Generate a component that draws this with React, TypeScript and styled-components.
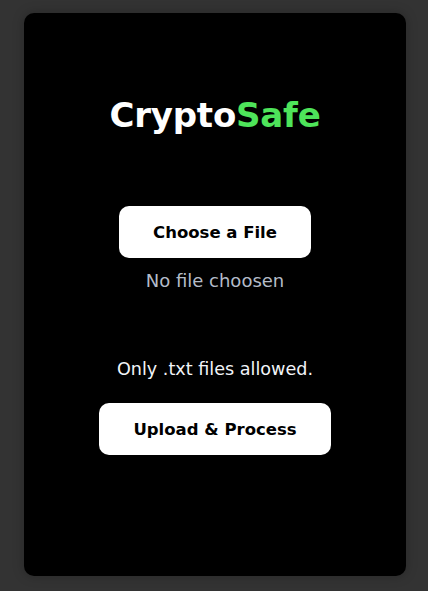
import React from "react";
import styled, { createGlobalStyle } from "styled-components";

const Global = createGlobalStyle`
  html, body { margin: 0; padding: 0; background: #333333; }
  body { font-family: "DejaVu Sans", "Noto Sans", sans-serif; }
`;

const Page = styled.div`
  width: 428px;
  height: 591px;
  box-sizing: border-box;
  padding: 13px 22px 15px 24px;
  display: flex;
  background: #333333;
`;

const Card = styled.main`
  width: 382px;
  height: 563px;
  background: #000;
  border-radius: 10px;
  box-shadow: 0 0 12px rgba(0, 0, 0, 0.25);
  display: flex;
  flex-direction: column;
  align-items: center;
  box-sizing: border-box;
  padding-top: 82px;
`;

const Title = styled.h1`
  margin: 0;
  font-size: 34px;
  line-height: 40px;
  font-weight: 700;
  color: #fff;
  letter-spacing: -0.2px;
`;

const Accent = styled.span`
  color: #4ee45a;
`;

const Button = styled.button<{ $w: number }>`
  width: ${(p) => p.$w}px;
  height: 52px;
  border: none;
  border-radius: 10px;
  background: #fff;
  color: #000;
  font-family: inherit;
  font-size: 16.5px;
  font-weight: 700;
  cursor: pointer;
`;

const Status = styled.p<{ $muted?: boolean }>`
  margin: 0;
  font-size: ${(p) => (p.$muted ? 18 : 17.6)}px;
  line-height: 22px;
  color: ${(p) => (p.$muted ? "#b4bcc8" : "#f2f4f8")};
`;

const Section = styled.div<{ $top: number; $gap: number }>`
  margin-top: ${(p) => p.$top}px;
  display: flex;
  flex-direction: column;
  align-items: center;
  gap: ${(p) => p.$gap}px;
`;

export default function App() {
  return (
    <>
      <Global />
      <Page>
        <Card>
          <Title>
            Crypto<Accent>Safe</Accent>
          </Title>
          <Section $top={71} $gap={12}>
            <Button $w={192}>Choose a File</Button>
            <Status $muted>No file choosen</Status>
          </Section>
          <Section $top={66} $gap={23}>
            <Status>Only .txt files allowed.</Status>
            <Button $w={232}>Upload &amp; Process</Button>
          </Section>
        </Card>
      </Page>
    </>
  );
}
